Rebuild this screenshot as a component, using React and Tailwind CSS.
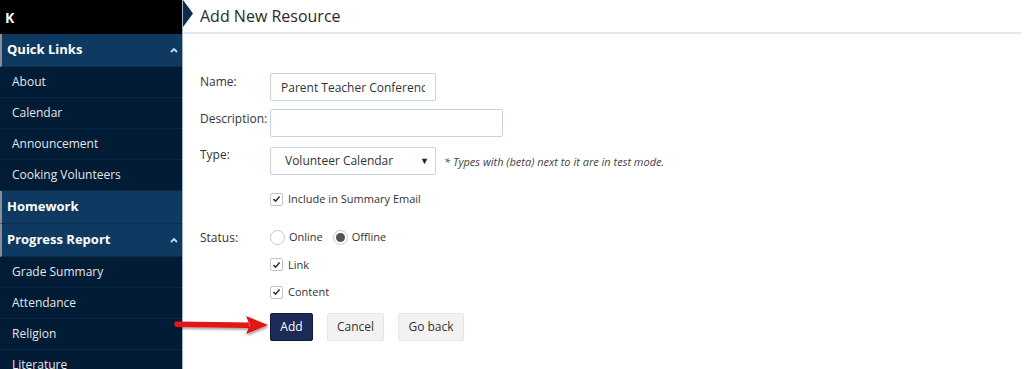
import { useState } from "react";

function Chevron() {
  return (
    <svg width="8" height="6" viewBox="0 0 8 6" className="ml-auto mr-[4px]">
      <path d="M1 5 L4 2 L7 5" fill="none" stroke="#c9d6e3" strokeWidth="1.8" />
    </svg>
  );
}

function SectionHeader({ label, open }) {
  return (
    <div className="flex shrink-0 items-center h-[33px] bg-[#0e3a61] border-l-2 border-[#8a8f95] border-b border-b-[#0a2d4d] pl-[5px] text-white font-bold text-[13px]">
      {label}
      {open && <Chevron />}
    </div>
  );
}

function SideItem({ label }) {
  return (
    <div className="flex shrink-0 items-center h-[31px] pl-[12px] bg-[#021c36] border-b border-[#0a2744] text-[#e3e6ea] text-[12px]">
      {label}
    </div>
  );
}

function Check({ checked }) {
  return (
    <span className="inline-flex items-center justify-center w-[13px] h-[13px] border border-[#c4c4c4] rounded-[2px] bg-white">
      {checked && (
        <svg width="9" height="8" viewBox="0 0 9 8">
          <path d="M1.5 4.2 L3.6 6.2 L7.6 1.6" fill="none" stroke="#333" strokeWidth="1.6" />
        </svg>
      )}
    </span>
  );
}

function Radio({ on }) {
  return (
    <span className="inline-flex items-center justify-center w-[15px] h-[15px] rounded-full border border-[#c8c8c8] bg-white">
      {on && <span className="w-[9px] h-[9px] rounded-full bg-[#555]" />}
    </span>
  );
}

export default function App() {
  const [name, setName] = useState("Parent Teacher Conference");

  return (
    <div
      className="flex h-[369px] w-[1024px] overflow-hidden bg-white"
      style={{ fontFamily: '"Open Sans", "Liberation Sans", sans-serif' }}
    >
      {/* Sidebar */}
      <div className="w-[183px] shrink-0 flex flex-col bg-[#021c36] border-r border-[#9fb6cc]">
        <div className="h-[34px] shrink-0 bg-black text-white font-bold text-[14px] flex items-center pl-[5px]">
          K
        </div>
        <SectionHeader label="Quick Links" open />
        <SideItem label="About" />
        <SideItem label="Calendar" />
        <SideItem label="Announcement" />
        <SideItem label="Cooking Volunteers" />
        <SectionHeader label="Homework" />
        <SectionHeader label="Progress Report" open />
        <SideItem label="Grade Summary" />
        <SideItem label="Attendance" />
        <SideItem label="Religion" />
        <SideItem label="Literature" />
      </div>

      {/* Main */}
      <div className="relative flex-1 flex flex-col">
        <div className="h-[34px] shrink-0 flex items-center border-b-2 border-[#dfe7ef] mr-[3px]">
          <svg width="10" height="27" viewBox="0 0 10 27" className="self-start shrink-0">
            <path d="M0 0 L10 13.5 L0 27 Z" fill="#0f2b4b" />
          </svg>
          <h1 className="ml-[7px] text-[16px] text-[#2a2a2a] leading-none">Add New Resource</h1>
        </div>

        <div className="pl-[17px] pt-[39px] text-[12px] text-[#333]">
          <div className="flex items-start">
            <label className="w-[70px] pt-[0px]">Name:</label>
            <input
              value={name}
              onChange={(e) => setName(e.target.value)}
              className="w-[166px] h-[28px] border border-[#c9d3de] rounded-[2px] px-[10px] text-[12px] text-[#333] outline-none"
            />
          </div>
          <div className="flex items-start mt-[8px]">
            <label className="w-[70px] pt-[1px]">Description:</label>
            <input className="w-[233px] h-[28px] border border-[#c9d3de] rounded-[2px] px-[10px] outline-none" />
          </div>
          <div className="flex items-start mt-[10px]">
            <label className="w-[70px] -mt-[1px]">Type:</label>
            <div className="w-[166px] h-[28px] border border-[#c9d3de] rounded-[2px] flex items-center pl-[14px] pr-[6px] text-[12px]">
              Volunteer Calendar
              <span className="ml-auto text-[9px] text-[#222]">▼</span>
            </div>
            <span className="ml-[8px] mt-[7px] italic text-[11px] text-[#444]">
              * Types with (beta) next to it are in test mode.
            </span>
          </div>
          <div className="flex items-center ml-[70px] mt-[16px] gap-[5px] text-[11px]">
            <Check checked />
            Include in Summary Email
          </div>
          <div className="flex items-center mt-[21px]">
            <label className="w-[70px]">Status:</label>
            <Radio />
            <span className="ml-[4px] text-[11px]">Online</span>
            <span className="ml-[10px] flex"><Radio on /></span>
            <span className="ml-[4px] text-[11px]">Offline</span>
          </div>
          <div className="flex items-center ml-[70px] mt-[10px] gap-[5px] text-[11px]">
            <Check checked />
            Link
          </div>
          <div className="flex items-center ml-[70px] mt-[11px] gap-[5px] text-[11px]">
            <Check checked />
            Content
          </div>
          <div className="flex items-center ml-[70px] mt-[12px] gap-[14px] text-[12px]">
            <button className="h-[28px] w-[43px] bg-[#1c2b57] text-white rounded-[2px] border border-[#111a3a]">Add</button>
            <button className="h-[28px] w-[57px] bg-[#f2f2f2] text-[#333] rounded-[2px] border border-[#e6e6e6]">Cancel</button>
            <button className="h-[28px] w-[66px] bg-[#f2f2f2] text-[#333] rounded-[2px] border border-[#e6e6e6]">Go back</button>
          </div>
        </div>

        {/* annotation arrow */}
        <svg
          width="100"
          height="26"
          viewBox="0 0 100 26"
          className="absolute left-[-10px] top-[313px] pointer-events-none"
        >
          <defs>
            <filter id="sh" x="-10%" y="-50%" width="120%" height="200%">
              <feDropShadow dx="1" dy="2" stdDeviation="1" floodColor="#000" floodOpacity="0.35" />
            </filter>
          </defs>
          <g filter="url(#sh)">
            <path d="M2.5 8.5 L76 9.5 L76 15 L2.5 14 Q0 11.2 2.5 8.5 Z" fill="#e21212" />
            <path d="M73 3 L95 12 L73 21 L77 12 Z" fill="#e21212" />
          </g>
        </svg>
      </div>
    </div>
  );
}
